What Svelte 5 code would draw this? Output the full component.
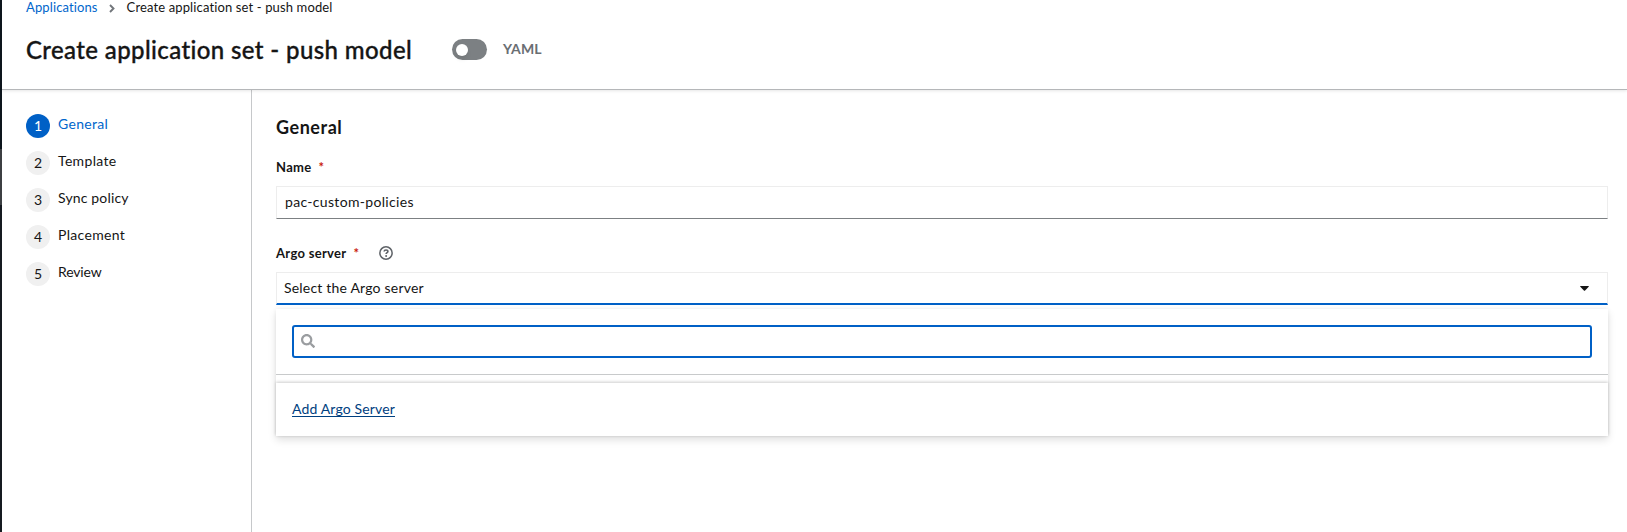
<script>
  const steps = [
    { label: 'General', tracking: 0.3 },
    { label: 'Template', tracking: 0.33 },
    { label: 'Sync policy', tracking: 0.16 },
    { label: 'Placement', tracking: 0.32 },
    { label: 'Review', tracking: -0.15 }
  ];
  let active = $state(0);
  let name = $state('pac-custom-policies');
</script>

<div class="page">
  <header>
    <nav class="crumbs">
      <a class="parent" href="#apps">Applications</a>
      <svg class="chevron" width="6" height="9" viewBox="0 0 6 9"><path d="M1 1l3.5 3.5L1 8" fill="none" stroke="#72767b" stroke-width="1.9" /></svg>
      <span>Create application set - push model</span>
    </nav>
    <div class="title-row">
      <h1>Create application set - push model</h1>
      <span class="toggle"><span class="knob"></span></span>
      <span class="toggle-label">YAML</span>
    </div>
  </header>
  <div class="body">
    <aside>
      {#each steps as step, i}
        <div class="step" class:active={i === active}>
          <span class="num">{i + 1}</span>
          <span class="step-label" style="letter-spacing: {step.tracking}px">{step.label}</span>
        </div>
      {/each}
    </aside>
    <main>
      <h2>General</h2>
      <div class="label first"><span>Name</span><span class="req">*</span></div>
      <div class="field">{name}</div>
      <div class="label second">
        <span>Argo server</span><span class="req">*</span>
        <svg class="help" width="14" height="14" viewBox="0 0 14 14">
          <circle cx="7" cy="7" r="6.15" fill="none" stroke="#5f6368" stroke-width="1.5" />
          <path d="M5.1 5.5C5.2 4.4 6 4 7 4c1.100 0 1.900.6 1.900 1.500C8.900 6.700 7.100 6.700 7.100 8.100" fill="none" stroke="#5f6368" stroke-width="1.600" />
          <circle cx="7.1" cy="10" r="1" fill="#5f6368" />
        </svg>
      </div>
      <div class="field select">
        <span>Select the Argo server</span>
        <svg width="9" height="5" viewBox="0 0 9 5"><path d="M.6 0h7.800q.8.100.3.700L5.100 4.600q-.6.500-1.200 0L.3.700Q-.1.100.6 0z" fill="#151515" /></svg>
      </div>
      <div class="menu">
        <div class="search-wrap">
          <div class="search">
            <svg width="14" height="14" viewBox="0 0 512 512"><path fill="#9a9da0" d="M505 442.700L405.300 343c-4.500-4.500-10.600-7-17-7H372c27.600-35.300 44-79.700 44-128C416 93.100 322.900 0 208 0S0 93.100 0 208s93.100 208 208 208c48.300 0 92.700-16.400 128-44v16.300c0 6.400 2.500 12.500 7 17l99.700 99.700c9.400 9.400 24.600 9.400 33.900 0l28.300-28.300c9.400-9.400 9.400-24.600.1-34zM208 336c-70.700 0-128-57.200-128-128 0-70.700 57.200-128 128-128 70.700 0 128 57.200 128 128 0 70.700-57.200 128-128 128z" /></svg>
          </div>
        </div>
        <div class="menu-footer"><a href="#add">Add Argo Server</a></div>
      </div>
    </main>
  </div>
</div>

<style>
  :global(body) { background: #fff; }
  .page, .page * { box-sizing: border-box; }
  .page {
    width: 100%; height: 532px; overflow: hidden; display: flex; flex-direction: column;
    font-family: Lato, sans-serif; font-size: 14px; color: #151515;
    border-left: 2px solid;
    border-image: linear-gradient(#0d151c 0 149px, #3c3f42 149px 205px, #151a20 205px) 1;
  }
  header {
    height: 90px; flex: none; padding-left: 24px; border-bottom: 1px solid #b5b7b9;
    box-shadow: 0 1px 3px rgba(3, 3, 3, .1); position: relative;
  }
  .crumbs { display: flex; align-items: center; height: 15px; font-size: 13px; line-height: 15px; letter-spacing: .13px; }
  .parent { color: #06c; text-decoration: none; letter-spacing: .12px; }
  .chevron { margin: 1px 12px 0 11px; }
  .title-row { display: flex; align-items: center; height: 32px; margin-top: 19px; }
  h1 { margin: -1px 0 0; font-size: 24px; line-height: 32px; font-weight: 500; letter-spacing: .38px; width: 426px; white-space: nowrap; -webkit-text-stroke: .35px #151515; }
  .toggle { width: 35px; height: 21px; border-radius: 11px; background: #7c8083; display: flex; align-items: center; padding-left: 4px; margin-top: -1px; }
  .knob { width: 12px; height: 12px; border-radius: 50%; background: #fff; box-shadow: 0 4px 4px rgba(3, 3, 3, .06); }
  .toggle-label { margin: -3px 0 0 16px; color: #6a6e73; font-weight: 700; letter-spacing: .1px; }
  .body { display: flex; flex: 1; }
  aside { width: 250px; border-right: 1px solid #c6c8ca; padding: 24px 0 0 24px; display: flex; flex-direction: column; gap: 13px; }
  .step { display: flex; height: 24px; gap: 8px; }
  .num { width: 24px; height: 24px; border-radius: 50%; background: #f0f0f0; text-align: center; line-height: 24px; }
  .step-label { line-height: 19px; }
  .active .num { background: #0060c6; color: #fff; }
  .active .step-label { color: #06c; }
  main { flex: 1; padding: 24px 19px 0 24px; }
  h2 { margin: 0; font-size: 18px; line-height: 27px; height: 27px; font-weight: 700; letter-spacing: .55px; }
  .label { display: flex; align-items: center; height: 20px; font-size: 13px; font-weight: 700; letter-spacing: .3px; }
  .first { margin-top: 16px; margin-bottom: 9px; }
  .second { margin-top: 24px; }
  .req { color: #c9190b; margin-left: 7px; }
  .help { margin-left: 20px; }
  .field {
    height: 33px; margin-top: 8px; border: 1px solid #ededed; border-bottom-color: #7c8083;
    padding: 0 8px 2px; display: flex; align-items: center; letter-spacing: .32px;
  }
  .select { margin-top: 9px; border-bottom: 2px solid #0060c6; padding: 0 18px 0 7px; justify-content: space-between; letter-spacing: .2px; }
  .select span { padding-bottom: 2px; }
  .menu { margin-top: 4px; height: 127px; background: #fff; box-shadow: 0 4px 8px rgba(3, 3, 3, .12), 0 0 4px rgba(3, 3, 3, .06); }
  .search-wrap { padding: 16px; height: 66px; border-bottom: 1px solid #c8cacb; }
  .search { height: 33px; border: 2px solid #0060c6; border-radius: 3px; display: flex; align-items: center; padding: 0 0 1px 7px; }
  .menu-footer { margin-top: 8px; height: 53px; padding: 0 0 2px 16px; display: flex; align-items: center; box-shadow: 0 -1px 3px rgba(3, 3, 3, .2); }
  .menu-footer a { color: #004080; letter-spacing: .15px; text-underline-offset: 2px; text-decoration-skip-ink: none; }
</style>
